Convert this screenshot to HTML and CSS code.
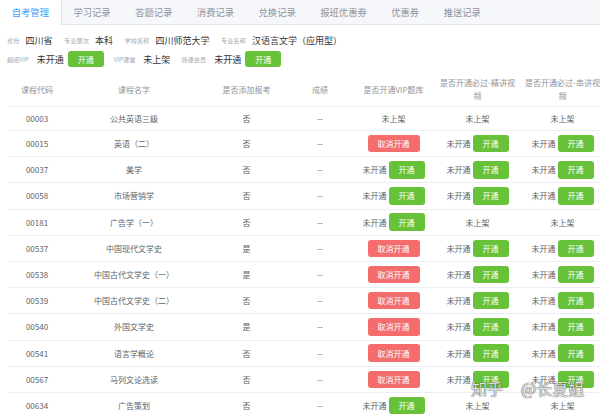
FILE: index.html
```html
<!DOCTYPE html>
<html lang="zh-CN">
<head>
<meta charset="utf-8">
<title>自考管理</title>
<link rel="stylesheet" href="styles.css">
</head>
<body>
<div class="tabs">
  <div class="tab active">自考管理</div>
  <div class="tab">学习记录</div>
  <div class="tab">答题记录</div>
  <div class="tab">消费记录</div>
  <div class="tab">兑换记录</div>
  <div class="tab">报班优惠券</div>
  <div class="tab">优惠券</div>
  <div class="tab">推送记录</div>
</div>
<div class="main">
  <div class="info-row first">
    <span class="label">省份</span><span class="value">四川省</span>
    <span class="label">专业层次</span><span class="value">本科</span>
    <span class="label">学校名称</span><span class="value">四川师范大学</span>
    <span class="label">专业名称</span><span class="value">汉语言文学（应用型）</span>
  </div>
  <div class="info-row second">
    <span class="label">超级VIP</span><span class="value tight">未开通</span><span class="btn green info-btn">开通</span>
    <span class="label">VIP课堂</span><span class="value">未上架</span>
    <span class="label">简课会员</span><span class="value tight">未开通</span><span class="btn green info-btn">开通</span>
  </div>
  <table class="grid">
    <colgroup>
      <col class="c1"><col class="c2"><col class="c3"><col class="c4"><col class="c5"><col class="c6"><col class="c7">
    </colgroup>
    <thead>
      <tr>
        <th class="first-col">课程代码</th><th>课程名字</th><th>是否添加报考</th><th>成绩</th><th>是否开通VIP题库</th><th>是否开通必过-精讲视频</th><th>是否开通必过-串讲视频</th>
      </tr>
    </thead>
    <tbody>
      <tr class="plain">
        <td class="first-col"><div class="cell">00003</div></td><td><div class="cell">公共英语三级</div></td><td><div class="cell">否</div></td><td><div class="cell">--</div></td>
        <td><div class="cell">未上架</div></td><td><div class="cell">未上架</div></td><td><div class="cell">未上架</div></td>
      </tr>
      <tr>
        <td class="first-col"><div class="cell">00015</div></td><td><div class="cell">英语（二）</div></td><td><div class="cell">否</div></td><td><div class="cell">--</div></td>
        <td><div class="cell"><span class="btn red">取消开通</span></div></td>
        <td><div class="cell">未开通<span class="btn green">开通</span></div></td>
        <td><div class="cell">未开通<span class="btn green">开通</span></div></td>
      </tr>
      <tr>
        <td class="first-col"><div class="cell">00037</div></td><td><div class="cell">美学</div></td><td><div class="cell">否</div></td><td><div class="cell">--</div></td>
        <td><div class="cell">未开通<span class="btn green">开通</span></div></td>
        <td><div class="cell">未开通<span class="btn green">开通</span></div></td>
        <td><div class="cell">未开通<span class="btn green">开通</span></div></td>
      </tr>
      <tr>
        <td class="first-col"><div class="cell">00058</div></td><td><div class="cell">市场营销学</div></td><td><div class="cell">否</div></td><td><div class="cell">--</div></td>
        <td><div class="cell">未开通<span class="btn green">开通</span></div></td>
        <td><div class="cell">未开通<span class="btn green">开通</span></div></td>
        <td><div class="cell">未开通<span class="btn green">开通</span></div></td>
      </tr>
      <tr>
        <td class="first-col"><div class="cell">00181</div></td><td><div class="cell">广告学（一）</div></td><td><div class="cell">否</div></td><td><div class="cell">--</div></td>
        <td><div class="cell">未开通<span class="btn green">开通</span></div></td>
        <td><div class="cell">未上架</div></td>
        <td><div class="cell">未上架</div></td>
      </tr>
      <tr>
        <td class="first-col"><div class="cell">00537</div></td><td><div class="cell">中国现代文学史</div></td><td><div class="cell">是</div></td><td><div class="cell">--</div></td>
        <td><div class="cell"><span class="btn red">取消开通</span></div></td>
        <td><div class="cell">未开通<span class="btn green">开通</span></div></td>
        <td><div class="cell">未开通<span class="btn green">开通</span></div></td>
      </tr>
      <tr>
        <td class="first-col"><div class="cell">00538</div></td><td><div class="cell">中国古代文学史（一）</div></td><td><div class="cell">是</div></td><td><div class="cell">--</div></td>
        <td><div class="cell"><span class="btn red">取消开通</span></div></td>
        <td><div class="cell">未开通<span class="btn green">开通</span></div></td>
        <td><div class="cell">未开通<span class="btn green">开通</span></div></td>
      </tr>
      <tr>
        <td class="first-col"><div class="cell">00539</div></td><td><div class="cell">中国古代文学史（二）</div></td><td><div class="cell">否</div></td><td><div class="cell">--</div></td>
        <td><div class="cell"><span class="btn red">取消开通</span></div></td>
        <td><div class="cell">未开通<span class="btn green">开通</span></div></td>
        <td><div class="cell">未开通<span class="btn green">开通</span></div></td>
      </tr>
      <tr>
        <td class="first-col"><div class="cell">00540</div></td><td><div class="cell">外国文学史</div></td><td><div class="cell">是</div></td><td><div class="cell">--</div></td>
        <td><div class="cell"><span class="btn red">取消开通</span></div></td>
        <td><div class="cell">未开通<span class="btn green">开通</span></div></td>
        <td><div class="cell">未开通<span class="btn green">开通</span></div></td>
      </tr>
      <tr>
        <td class="first-col"><div class="cell">00541</div></td><td><div class="cell">语言学概论</div></td><td><div class="cell">否</div></td><td><div class="cell">--</div></td>
        <td><div class="cell"><span class="btn red">取消开通</span></div></td>
        <td><div class="cell">未开通<span class="btn green">开通</span></div></td>
        <td><div class="cell">未开通<span class="btn green">开通</span></div></td>
      </tr>
      <tr>
        <td class="first-col"><div class="cell">00567</div></td><td><div class="cell">马列文论选读</div></td><td><div class="cell">否</div></td><td><div class="cell">--</div></td>
        <td><div class="cell"><span class="btn red">取消开通</span></div></td>
        <td><div class="cell">未开通<span class="btn green">开通</span></div></td>
        <td><div class="cell">未开通<span class="btn green">开通</span></div></td>
      </tr>
      <tr>
        <td class="first-col"><div class="cell">00634</div></td><td><div class="cell">广告策划</div></td><td><div class="cell">否</div></td><td><div class="cell">--</div></td>
        <td><div class="cell">未开通<span class="btn green">开通</span></div></td>
        <td><div class="cell">未上架</div></td>
        <td><div class="cell">未上架</div></td>
      </tr>
    </tbody>
  </table>
</div>
<div class="watermark"><span>知乎</span><span class="handle">@长夏姐</span></div>
</body>
</html>
```
FILE: styles.css
```css
* { box-sizing: border-box; }
html, body { margin: 0; padding: 0; }
body {
  width: 600px;
  height: 416px;
  overflow: hidden;
  position: relative;
  background: #fff;
  color: #606266;
  font-family: "Noto Sans CJK SC", "Noto Sans", sans-serif;
}

.tabs {
  display: flex;
  height: 25px;
  background: #f5f7fa;
  border-bottom: 1px solid #e4e7ed;
}
.tab {
  height: 25px;
  margin-bottom: -1px;
  padding: 0 11.75px;
  font-size: 9.3px;
  line-height: 24px;
  color: #909399;
  border-right: 1px solid transparent;
  white-space: nowrap;
}
.tab.active {
  background: #fff;
  color: #409eff;
  border-right-color: #dcdfe6;
}

.main { padding-left: 7px; }

.info-row {
  display: flex;
  align-items: center;
  height: 16px;
  white-space: nowrap;
}
.info-row.first { margin-top: 7px; }
.info-row.second { margin-top: 3px; }
.label {
  font-size: 6.2px;
  color: #a8abb2;
  margin-right: 6.2px;
}
.value {
  font-size: 9px;
  color: #303133;
  margin-right: 11.5px;
}
.second .label { margin-right: 8px; }
.second .value { margin-right: 11px; }
.second .value.tight { margin-right: 4px; }

.btn {
  display: inline-flex;
  align-items: center;
  justify-content: center;
  height: 17.5px;
  padding: 0 10px;
  font-size: 8px;
  color: #fff;
  border-radius: 3px;
  white-space: nowrap;
}
.btn.green { background: #67c23a; }
.btn.red { background: #f56c6c; }
.info-btn { height: 16px; margin-right: 10px; }

.grid {
  margin-top: 5px;
  margin-left: 1px;
  width: 597px;
  table-layout: fixed;
  border-collapse: collapse;
}
.c1 { width: 55px; }
.c2 { width: 142px; }
.c3 { width: 83px; }
.c4 { width: 64px; }
.c5 { width: 83px; }
.c6 { width: 85px; }
.c7 { width: 85px; }

.grid th {
  height: 34px;
  padding: 4px 4px;
  font-size: 8px;
  font-weight: normal;
  line-height: 13px;
  color: #909399;
  text-align: center;
  vertical-align: middle;
  border-bottom: 1px solid #ebeef5;
}
.grid td {
  padding: 4px 4px;
  font-size: 8px;
  line-height: 15px;
  color: #606266;
  text-align: center;
  border-bottom: 1px solid #ebeef5;
}
.grid .first-col { padding-left: 7px; padding-right: 4px; }
.cell {
  display: flex;
  align-items: center;
  justify-content: center;
  gap: 2px;
  height: 17.2px;
  white-space: nowrap;
}
.plain .cell { height: 15px; }

.watermark {
  position: absolute;
  left: 471px;
  top: 377px;
  font-size: 16px;
  line-height: 22px;
  color: rgba(255, 255, 255, 0.85);
  text-shadow: 0 0 1px rgba(60, 60, 60, 0.9), 0 0 1px rgba(60, 60, 60, 0.9);
  white-space: nowrap;
}
.watermark .handle { margin-left: 18px; }
```
